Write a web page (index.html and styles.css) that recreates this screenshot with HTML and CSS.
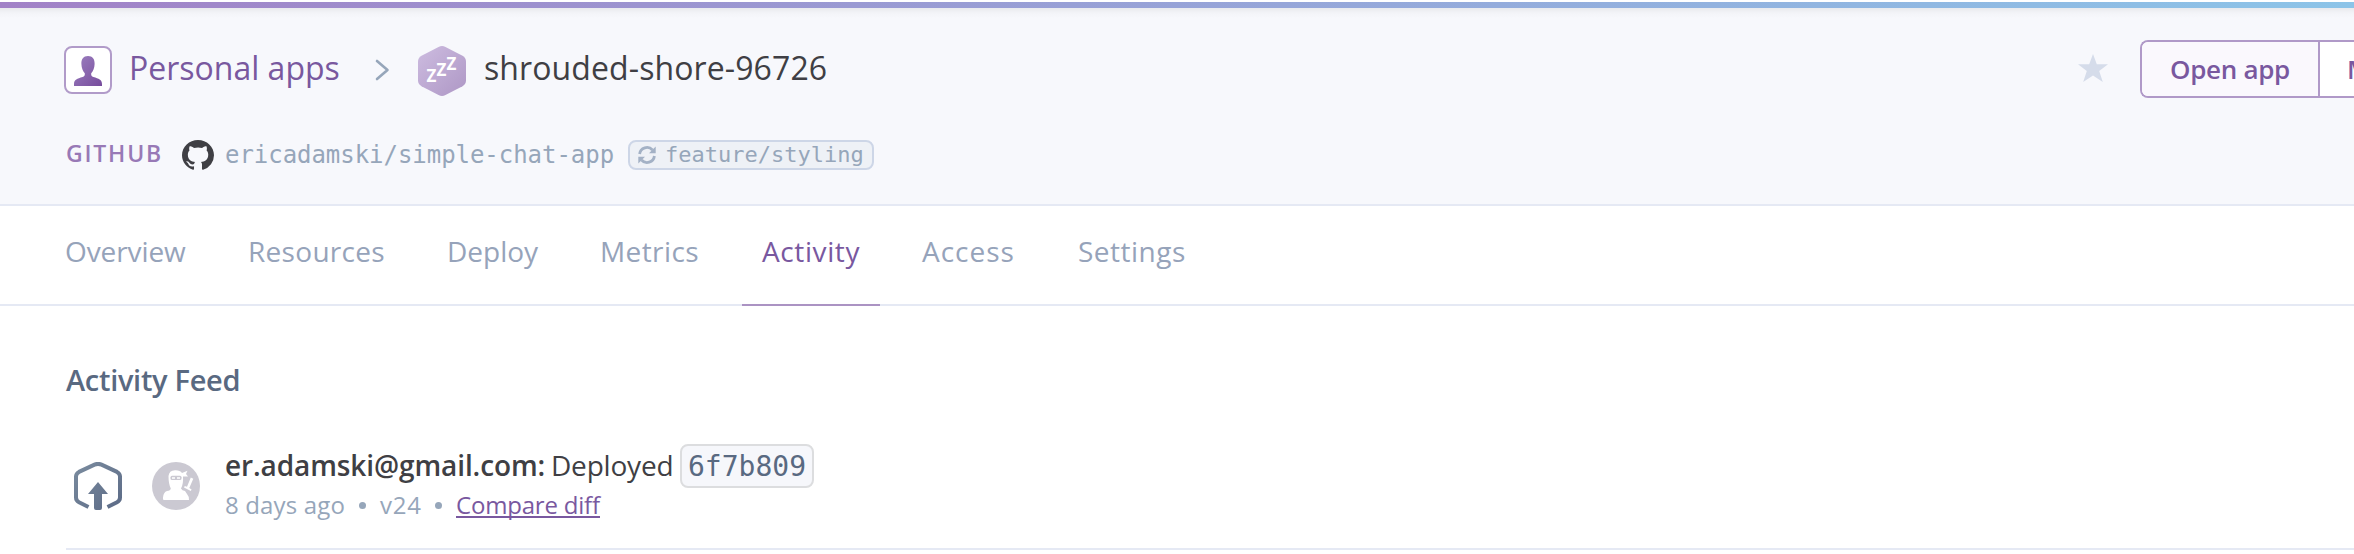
FILE: index.html
```html
<!DOCTYPE html>
<html lang="en">
<head>
<meta charset="utf-8">
<title>shrouded-shore-96726 · Activity</title>
<link rel="stylesheet" href="styles.css">
</head>
<body>
<div class="topbar"></div>
<header class="header">
  <div class="header-main">
    <svg class="avatar" viewBox="0 0 48 48">
      <defs><linearGradient id="person" x1="0" y1="0" x2="1" y2="1"><stop offset="0" stop-color="#9c80c0"/><stop offset="1" stop-color="#774c9c"/></linearGradient></defs>
      <rect x="1" y="1" width="46" height="46" rx="7" fill="#fff" stroke="#b19bc9" stroke-width="2"/>
      <path d="M24 10c4.600 0 6.800 3.200 6.600 8c-.1 4-1.400 7.200-3.400 9.200c-.2 2.200.4 3.300 2.200 3.900c5.400 1.700 8.600 2.800 8.600 6.900v2H10v-2c0-4.100 3.200-5.200 8.600-6.900c1.800-.6 2.400-1.700 2.200-3.900c-2-2-3.300-5.200-3.400-9.200C17.200 13.200 19.400 10 24 10z" fill="url(#person)"/>
    </svg>
    <a class="crumb">Personal apps</a>
    <svg class="chevron" viewBox="0 0 15 22"><path d="M2 2L12.500 11L2 20" fill="none" stroke="#96a6ba" stroke-width="2.600" stroke-linecap="round" stroke-linejoin="round"/></svg>
    <svg class="hexagon" viewBox="0 0 48 50">
      <defs><linearGradient id="hex" x1="0" y1="0" x2="1" y2="1"><stop offset="0" stop-color="#cdbce0"/><stop offset="1" stop-color="#ae97c5"/></linearGradient></defs>
      <path d="M20.500 1Q24-.8 27.500 1L44.500 9.800Q48 11.800 48 15.500V34.500Q48 38.200 44.500 40.200L27.500 49Q24 50.800 20.500 49L3.500 40.200Q0 38.200 0 34.500V15.500Q0 11.800 3.500 9.800Z" fill="url(#hex)"/>
      <g class="zzz"><text x="8.500" y="36">Z</text><text x="18.500" y="30">Z</text><text x="28.500" y="24">Z</text></g>
    </svg>
    <h1 class="app-name">shrouded-shore-96726</h1>
    <svg class="star" viewBox="0 0 30 28"><path d="M15 0L18.800 10.200L30 10.300L21.200 17L24.800 28L15 21.500L5.200 28L8.800 17L0 10.300L11.200 10.200Z" fill="#d5dcea"/></svg>
    <div class="button-group"><a class="button button-open">Open app</a><a class="button button-more">M</a></div>
  </div>
  <div class="header-repo">
    <span class="repo-label">GITHUB</span>
    <svg class="octocat" viewBox="0 0 16 15.700" preserveAspectRatio="none"><path fill="#3f3f44" d="M8 0C3.580 0 0 3.580 0 8c0 3.540 2.290 6.530 5.470 7.590.4.070.55-.17.55-.38 0-.19-.01-.82-.01-1.490-2.010.37-2.530-.49-2.690-.94-.09-.23-.48-.94-.82-1.130-.28-.15-.68-.52-.01-.53.63-.01 1.080.58 1.230.82.72 1.210 1.870.87 2.330.66.07-.52.28-.87.51-1.070-1.780-.2-3.640-.89-3.640-3.950 0-.87.31-1.590.82-2.150-.08-.2-.36-1.020.08-2.120 0 0 .67-.21 2.200.82.64-.18 1.320-.27 2-.27s1.360.09 2 .27c1.530-1.040 2.200-.82 2.200-.82.44 1.100.16 1.920.08 2.120.51.56.82 1.270.82 2.150 0 3.070-1.870 3.750-3.650 3.950.29.25.54.73.54 1.480 0 1.070-.01 1.930-.01 2.200 0 .21.15.46.55.38A8.010 8.010 0 0 0 16 8c0-4.420-3.580-8-8-8z"/></svg>
    <span class="repo-name">ericadamski/simple-chat-app</span>
    <span class="branch">
      <svg class="sync" viewBox="0 0 18 18"><g fill="none" stroke="#a3b1c5" stroke-width="2.800"><path d="M1.600 8A7.400 7.400 0 0 1 14.500 4"/><path d="M16.400 10A7.400 7.400 0 0 1 3.500 14"/></g><path d="M17.700 .5V7.200H11ZM.3 17.500V10.800H7Z" fill="#a3b1c5"/></svg>
      <span class="branch-name">feature/styling</span>
    </span>
  </div>
</header>
<nav class="tabs">
  <a class="tab tab-overview">Overview</a>
  <a class="tab tab-resources">Resources</a>
  <a class="tab tab-deploy">Deploy</a>
  <a class="tab tab-metrics">Metrics</a>
  <a class="tab tab-activity active">Activity</a>
  <a class="tab tab-access">Access</a>
  <a class="tab tab-settings">Settings</a>
</nav>
<main class="feed">
  <h2 class="feed-title">Activity Feed</h2>
  <article class="item">
    <svg class="deploy-icon" viewBox="0 0 48 48">
      <defs><linearGradient id="slate" gradientUnits="userSpaceOnUse" x1="0" y1="0" x2="48" y2="48"><stop offset="0" stop-color="#7b8c9f"/><stop offset="1" stop-color="#5b6a86"/></linearGradient></defs>
      <path d="M14.500 45L5 40.300Q2 38.700 2 35.500V14.500Q2 11.500 5 9.900L20.500 2.600Q24 1.200 27.500 2.600L43 9.900Q46 11.500 46 14.500V35.500Q46 38.700 43 40.300L33.500 45" fill="none" stroke="url(#slate)" stroke-width="4"/>
      <path d="M24 20L34 32H28V46Q28 48 26 48H22Q20 48 20 46V32H14Z" fill="url(#slate)"/>
    </svg>
    <svg class="ninja" viewBox="0 0 48 48">
      <circle cx="24" cy="24" r="24" fill="#cbc9d2"/>
      <path d="M16.500 14Q17 8.500 23 8.200Q28 8 30 11L35.500 8.800L34 12L36 14.500L31 14.500Q31.500 22 29 26.500Q30 28.500 33 29L35 32Q37.500 35 37 38H12Q10.500 38 11 35.500Q11.500 30 15 29Q18.500 28.500 18.800 26.500Q16.500 22 16.500 14Z" fill="#fff"/>
      <path d="M38.800 15.500L41.300 16.800L37.300 26L39.600 27.500L38.800 29L32 25.500L32.800 24L35 24.800Z" fill="#fff"/>
      <rect x="18.500" y="13.800" width="11" height="4.200" rx="1.500" fill="#cbc9d2"/>
      <path d="M20 16H23M25 16H28" stroke="#fff" stroke-width="1.300"/>
    </svg>
    <div class="item-text">
      <div class="item-line"><strong class="item-user">er.adamski@gmail.com:</strong><span class="item-action">Deployed</span><code class="commit">6f7b809</code></div>
      <div class="item-meta"><span class="age">8 days ago</span><i class="dot"></i><span class="version">v24</span><i class="dot"></i><a class="compare">Compare diff</a></div>
    </div>
  </article>
</main>
</body>
</html>
```
FILE: styles.css
```css
* { box-sizing: border-box; }
body {
  margin: 0;
  padding-top: 2px;
  height: 554px;
  overflow: hidden;
  background: #fff;
  font-family: "Open Sans", sans-serif;
  font-weight: 400;
  white-space: nowrap;
}
svg { display: block; flex: none; }
h1, h2 { margin: 0; font-weight: inherit; }

.topbar { height: 6px; background: linear-gradient(90deg, #a282c7, #8cc4e8); }

/* App header */
.header {
  height: 198px;
  padding: 32px 0 0 64px;
  border-bottom: 2px solid #e5e9f4;
  background: linear-gradient(#e9eaed, #f3f4f8 5px, #f7f8fc 10px);
}
.header-main { display: flex; align-items: center; height: 60px; }
.avatar { width: 48px; height: 48px; }
.crumb, .app-name { align-self: flex-start; line-height: 56px; font-size: 32px; }
.crumb { width: 244px; padding-left: 17px; color: #79589f; }
.chevron { width: 15px; height: 22px; margin-left: 19px; }
.hexagon { width: 48px; height: 50px; margin: 2px 0 0 28px; }
.zzz { fill: #fff; font: 700 17px "Open Sans", sans-serif; }
.app-name { margin-left: 18px; letter-spacing: .1px; color: #3f3f44; }
.star { width: 30px; height: 28px; margin: 0 32px 4px auto; }
.button-group {
  display: flex;
  flex: none;
  align-self: flex-start;
  width: 214px;
  height: 58px;
  overflow: hidden;
  border: 2px solid #b099c8;
  border-right: 0;
  border-radius: 8px 0 0 8px;
  background: #fff;
}
.button { line-height: 54px; font-size: 26px; font-weight: 600; color: #79589f; flex: none; }
.button-open { width: 178px; padding-left: 28px; letter-spacing: -.3px; border-right: 2px solid #b099c8; background: #faf8fd; }
.button-more { padding-left: 27px; }

.header-repo { display: flex; align-items: flex-start; height: 30px; margin-top: 40px; }
.repo-label { width: 118px; padding-left: 2px; line-height: 27px; font-size: 23px; font-weight: 600; letter-spacing: 1.800px; color: #9879b6; }
.octocat { width: 32px; height: 30px; }
.repo-name, .branch-name, .commit { font-family: "DejaVu Sans Mono", monospace; font-weight: 400; }
.repo-name { width: 402px; padding-left: 11px; line-height: 30px; font-size: 24px; letter-spacing: -.04px; color: #96a6ba; }
.branch {
  display: flex;
  align-items: flex-start;
  width: 246px;
  height: 30px;
  margin-left: 12px;
  padding: 0 7px 0 8px;
  border: 2px solid #cdd6e7;
  border-radius: 8px;
  background: #eef1f6;
}
.sync { width: 18px; height: 18px; margin: 4px 9px 0 0; }
.branch-name { line-height: 25px; font-size: 22px; color: #96a6ba; }

/* Tabs */
.tabs { display: flex; gap: 22px; height: 100px; padding-left: 45px; border-bottom: 2px solid #e5e9f4; }
.tab { height: 100px; padding: 0 20px; line-height: 91px; font-size: 28px; color: #96a3ba; }
.tab.active { color: #79589f; border-bottom: 2px solid #ab93c3; }
.tab-overview { width: 161px; letter-spacing: -.1px; }
.tab-resources { width: 177px; letter-spacing: .3px; }
.tab-deploy { width: 131px; }
.tab-metrics { width: 140px; letter-spacing: .4px; }
.tab-activity { width: 138px; letter-spacing: .6px; }
.tab-access { width: 133px; letter-spacing: 1px; }
.tab-settings { padding-left: 21px; letter-spacing: .5px; }

/* Activity feed */
.feed { padding: 53px 0 0 66px; }
.feed-title { line-height: 41px; font-size: 29px; font-weight: 600; letter-spacing: -.3px; color: #596981; }
.item { display: flex; align-items: flex-start; height: 106px; margin-top: 44px; padding-left: 8px; border-bottom: 2px solid #e5e9f4; }
.deploy-icon, .ninja { width: 48px; height: 48px; margin-top: 18px; }
.ninja { margin-left: 30px; }
.item-text { padding-left: 25px; }
.item-line { display: flex; height: 44px; line-height: 42px; font-size: 28px; color: #3f3f44; }
.item-user { width: 326px; font-weight: 600; letter-spacing: -.1px; }
.item-action { width: 129px; letter-spacing: -.2px; }
.commit {
  width: 134px;
  height: 44px;
  padding-left: 6px;
  border: 2px solid #dcdddf;
  border-radius: 8px;
  line-height: 41px;
  background: #f6f7fb;
  color: #596981;
}
.item-meta { display: flex; align-items: flex-start; height: 33px; line-height: 33px; font-size: 24px; color: #96a6ba; }
.age { width: 134px; letter-spacing: .15px; }
.version { width: 55px; letter-spacing: .8px; }
.dot { width: 7px; height: 7px; margin: 14px 14px 0 0; border-radius: 50%; background: #96a6ba; }
.compare { color: #79589f; height: 30px; line-height: 33px; letter-spacing: -.2px; border-bottom: 2px solid #79589f; }
```
